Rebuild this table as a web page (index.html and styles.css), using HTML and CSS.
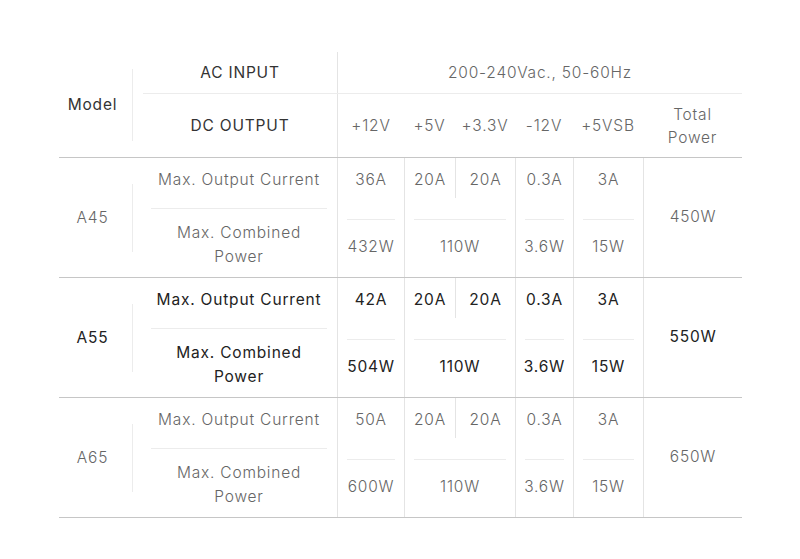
FILE: index.html
```html
<!DOCTYPE html>
<html lang="en">
<head>
<meta charset="utf-8">
<title>PSU Specifications</title>
<link rel="stylesheet" href="styles.css">
</head>
<body>
<div class="spec">
  <div class="head">
    <div class="model"><div class="model-in model-in--head">Model</div></div>
    <div class="h-right">
      <div class="h-row1">
        <div class="h-lab">AC INPUT</div>
        <div class="h-ac">200-240Vac., 50-60Hz</div>
      </div>
      <div class="h-row2">
        <div class="h-lab">DC OUTPUT</div>
        <div class="h-vals">
          <div class="hc w1">+12V</div>
          <div class="hc w2">+5V</div>
          <div class="hc w3">+3.3V</div>
          <div class="hc w4">-12V</div>
          <div class="hc w5">+5VSB</div>
          <div class="hc w6">Total<br>Power</div>
        </div>
      </div>
    </div>
  </div>

  <div class="row">
    <div class="model"><div class="model-in">A45</div></div>
    <div class="labels">
      <div class="lab1">Max. Output Current</div>
      <div class="lab2">Max. Combined<br>Power</div>
    </div>
    <div class="vals">
      <div class="col c1"><div class="cur">36A</div><div class="sep"></div><div class="pow">432W</div></div>
      <div class="col cm"><div class="cur cur-split"><div class="sub s1">20A</div><div class="sub s2">20A</div></div><div class="sep"></div><div class="pow">110W</div></div>
      <div class="col c4"><div class="cur">0.3A</div><div class="sep"></div><div class="pow">3.6W</div></div>
      <div class="col c5"><div class="cur">3A</div><div class="sep"></div><div class="pow">15W</div></div>
      <div class="col total">450W</div>
    </div>
  </div>

  <div class="row bold">
    <div class="model"><div class="model-in">A55</div></div>
    <div class="labels">
      <div class="lab1">Max. Output Current</div>
      <div class="lab2">Max. Combined<br>Power</div>
    </div>
    <div class="vals">
      <div class="col c1"><div class="cur">42A</div><div class="sep"></div><div class="pow">504W</div></div>
      <div class="col cm"><div class="cur cur-split"><div class="sub s1">20A</div><div class="sub s2">20A</div></div><div class="sep"></div><div class="pow">110W</div></div>
      <div class="col c4"><div class="cur">0.3A</div><div class="sep"></div><div class="pow">3.6W</div></div>
      <div class="col c5"><div class="cur">3A</div><div class="sep"></div><div class="pow">15W</div></div>
      <div class="col total">550W</div>
    </div>
  </div>

  <div class="row row--last">
    <div class="model"><div class="model-in">A65</div></div>
    <div class="labels">
      <div class="lab1">Max. Output Current</div>
      <div class="lab2">Max. Combined<br>Power</div>
    </div>
    <div class="vals">
      <div class="col c1"><div class="cur">50A</div><div class="sep"></div><div class="pow">600W</div></div>
      <div class="col cm"><div class="cur cur-split"><div class="sub s1">20A</div><div class="sub s2">20A</div></div><div class="sep"></div><div class="pow">110W</div></div>
      <div class="col c4"><div class="cur">0.3A</div><div class="sep"></div><div class="pow">3.6W</div></div>
      <div class="col c5"><div class="cur">3A</div><div class="sep"></div><div class="pow">15W</div></div>
      <div class="col total">650W</div>
    </div>
  </div>
</div>
</body>
</html>
```

FILE: styles.css
```css
* { box-sizing: border-box; }

html, body {
  margin: 0;
  padding: 0;
  background: #ffffff;
}

body {
  font-family: "Inter", "Open Sans", "DejaVu Sans", sans-serif;
  font-size: 15.5px;
  font-weight: 300;
  letter-spacing: 0.8px;
  color: #666666;
  line-height: 24px;
}

.spec {
  width: 683px;
  margin: 52px 0 0 59px;
}

/* header */
.head {
  display: flex;
  height: 106px;
  border-bottom: 1px solid #c6c6c6;
}

.model {
  width: 74px;
  flex: none;
  display: flex;
  align-items: center;
}

.model-in {
  width: 100%;
  height: 68px;
  border-right: 1px solid #ececec;
  display: flex;
  align-items: center;
  justify-content: center;
  padding-right: 6px;
}

.model-in--head {
  height: 72px;
  color: #333333;
  font-weight: 400;
}

.h-right {
  flex: 1;
  margin-left: 10px;
  display: flex;
  flex-direction: column;
}

.h-row1 {
  height: 42px;
  display: flex;
  border-bottom: 1px solid #ececec;
}

.h-row2 {
  flex: 1;
  display: flex;
}

.h-lab {
  width: 194px;
  flex: none;
  display: flex;
  align-items: center;
  justify-content: center;
  color: #333333;
  font-weight: 400;
}

.h-ac {
  width: 405px;
  flex: none;
  border-left: 1px solid #e4e4e4;
  display: flex;
  align-items: center;
  justify-content: center;
}

.h-vals {
  width: 405px;
  flex: none;
  border-left: 1px solid #e4e4e4;
  display: flex;
}

.hc {
  display: flex;
  align-items: center;
  justify-content: center;
  text-align: center;
  line-height: 23px;
}

.w1 { width: 66px; }
.w2 { width: 51px; }
.w3 { width: 60px; }
.w4 { width: 58px; }
.w5 { width: 70px; }
.w6 { width: 99px; }

/* data rows */
.row {
  display: flex;
  height: 120px;
  border-bottom: 1px solid #c6c6c6;
}

.row--last {
  height: 120px;
}

.labels {
  width: 204px;
  flex: none;
  padding: 0 10px 0 18px;
  display: flex;
  flex-direction: column;
  text-align: center;
}

.lab1 {
  height: 51px;
  padding-top: 10px;
  border-bottom: 1px solid #ececec;
}

.lab2 {
  padding-top: 12px;
}

.vals {
  width: 405px;
  flex: none;
  display: flex;
}

.col {
  border-left: 1px solid #e4e4e4;
  display: flex;
  flex-direction: column;
  text-align: center;
}

.c1 { width: 67px; }
.cm { width: 111px; }
.c4 { width: 58px; }
.c5 { width: 70px; }

.total {
  width: 99px;
  justify-content: center;
  padding-bottom: 2px;
}

.cur {
  height: 61px;
  padding-top: 10px;
}

.cur-split {
  display: flex;
  padding-top: 0;
}

.sub {
  height: 40px;
  padding-top: 10px;
}

.s1 { width: 50px; }
.s2 { width: 60px; border-left: 1px solid #e4e4e4; }

.sep {
  height: 1px;
  margin: 0 9px;
  background: #ececec;
}

.pow {
  padding-top: 15px;
}

.bold {
  color: #222222;
  font-weight: 420;
}
```
